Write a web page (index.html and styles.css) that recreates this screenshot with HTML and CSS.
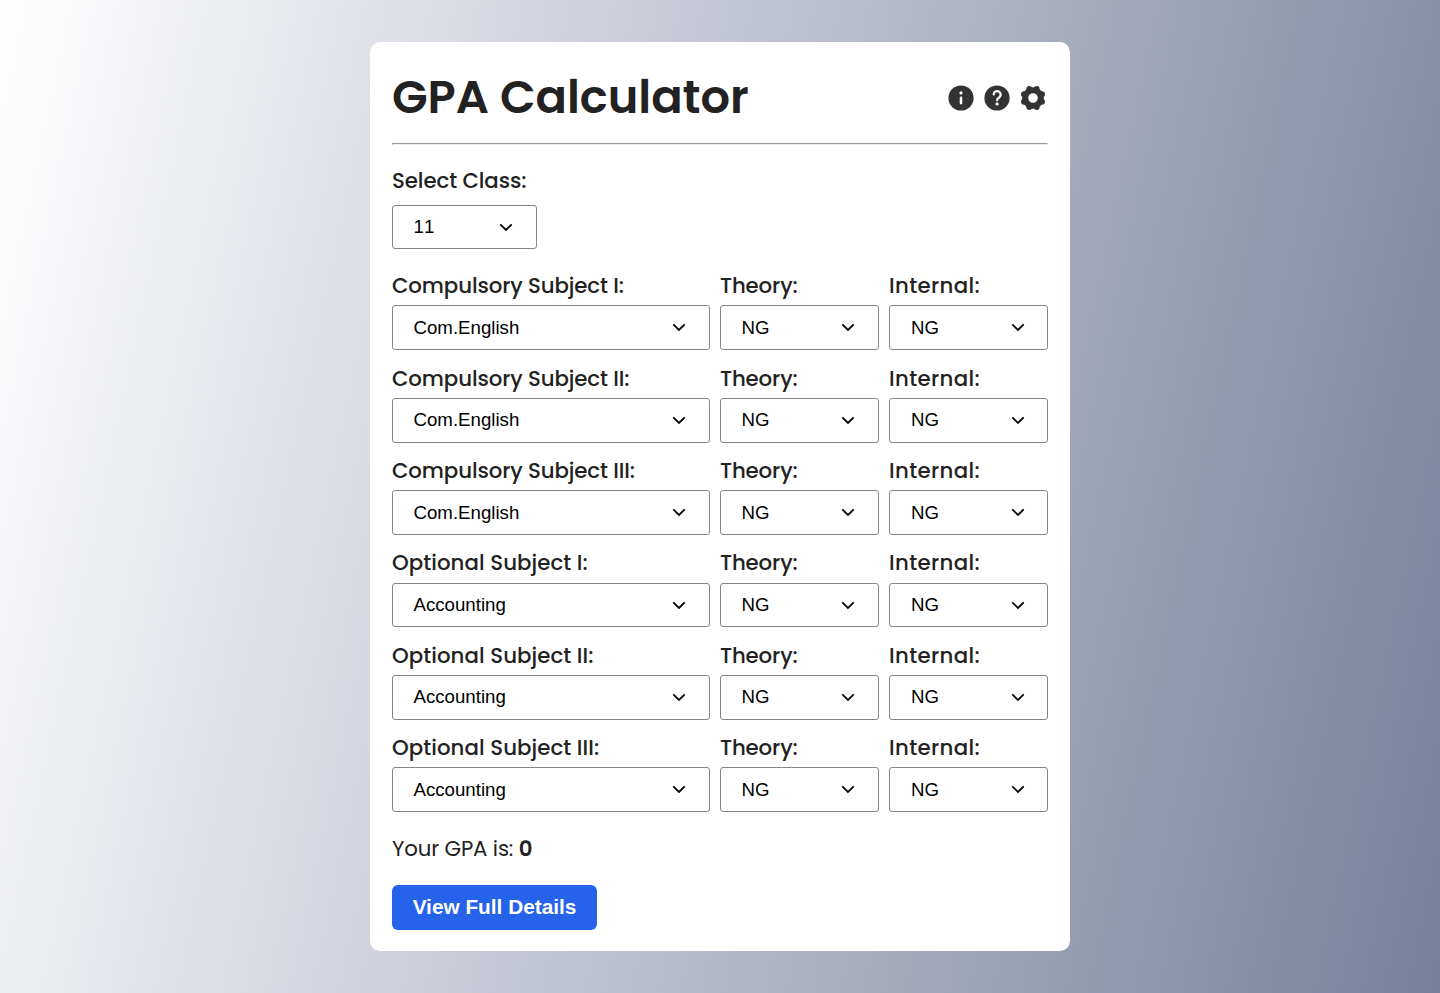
FILE: index.html
```html
<!DOCTYPE html>
<html lang="en">
<head>
<meta charset="utf-8">
<title>GPA Calculator</title>
<link rel="stylesheet" href="styles.css">
</head>
<body>
<main class="card">
  <header class="header">
    <h1 class="title">GPA Calculator</h1>
    <div class="icons">
      <svg class="icon" viewBox="0 0 26 26"><circle cx="13" cy="13" r="12.6" fill="#333"/><circle cx="13" cy="7.9" r="1.6" fill="#fff"/><path d="M13 12.800v5.300" stroke="#fff" stroke-width="2.6" stroke-linecap="round"/></svg>
      <svg class="icon" viewBox="0 0 26 26"><circle cx="13" cy="13" r="12.6" fill="#333"/><path d="M9.700 9.400a3.500 3.500 0 1 1 5.800 2.800c-1.500 1.200-2.400 1.600-2.400 3" fill="none" stroke="#fff" stroke-width="2.3" stroke-linecap="round"/><circle cx="13.100" cy="18.900" r="1.6" fill="#fff"/></svg>
      <svg class="icon" viewBox="0 0 26 26"><circle cx="13" cy="13" r="7.800" fill="none" stroke="#333" stroke-width="6"/><g fill="#333"><circle cx="16.750" cy="3.950" r="2.900"/><circle cx="22.050" cy="9.250" r="2.900"/><circle cx="22.050" cy="16.750" r="2.900"/><circle cx="16.750" cy="22.050" r="2.900"/><circle cx="9.250" cy="22.050" r="2.900"/><circle cx="3.950" cy="16.750" r="2.900"/><circle cx="3.950" cy="9.250" r="2.900"/><circle cx="9.250" cy="3.950" r="2.900"/></g></svg>
    </div>
  </header>
  <hr class="rule">
  <section class="class-field">
    <div class="label l-class">Select Class:</div>
    <div class="select select-class">11<svg class="chevron" viewBox="0 0 14 9"><path d="M1.300 1.300L7 7l5.700-5.700"/></svg></div>
  </section>
  <section class="subjects" id="subjects"></section>
  <p class="result">Your GPA is: <b class="gpa">0</b></p>
  <button class="button">View Full Details</button>
</main>
<script src="script.js"></script>
</body>
</html>
```
FILE: styles.css
```css
* { box-sizing: border-box; }
body {
  margin: 0;
  height: 993px;
  display: flex;
  align-items: center;
  justify-content: center;
  font-family: Poppins, Inter, sans-serif;
  color: #222;
  background: linear-gradient(102deg, #fff, #777f9b);
}
.card {
  width: 700px;
  height: 909px;
  padding: 20px 22px 21px;
  border-radius: 10px;
  background: #fff;
}
.header { display: flex; align-items: center; justify-content: space-between; height: 72px; }
.title { margin: 0; padding-bottom: 2px; font-size: 46.4px; font-weight: 600; line-height: 70px; letter-spacing: -0.04px; }
.icons { display: flex; gap: 10px; padding-right: 2px; }
.icon { width: 26px; height: 26px; display: block; }
.rule { margin: 9px 0 0; }
.label { font-size: 21.3px; font-weight: 500; line-height: 32px; height: 32px; white-space: nowrap; }
.l-class { letter-spacing: -0.08px; }
.l-compulsory { letter-spacing: -0.11px; }
.l-optional { letter-spacing: 0.06px; }
.l-theory { letter-spacing: -0.12px; }
.l-internal { letter-spacing: 0.36px; }
.class-field { margin-top: 20px; }
.select {
  display: flex;
  align-items: center;
  justify-content: space-between;
  height: 44.8px;
  padding: 0.3px 23.5px 0 20.5px;
  border: 1px solid #85858a;
  border-radius: 3px;
  color: #000;
  font: 18.67px "Liberation Sans", sans-serif;
}
.l-internal + .select { padding-right: 22.5px; padding-left: 21px; }
.select-class { width: 145px; height: 44px; margin-top: 8px; padding-top: 0; font-kerning: none; }
.chevron { width: 14px; height: 9px; fill: none; stroke: #000; stroke-width: 1.8; }
.subjects { margin-top: 21.2px; display: grid; gap: 12.6px; }
.row { display: grid; grid-template-columns: 318px 159px 159px; column-gap: 10px; }
.row .label { height: 35.2px; }
.row + .row { margin-top: -0.2px; }
.result { margin: 20.8px 0 0; font-size: 21.3px; line-height: 32px; letter-spacing: -0.16px; }
.gpa { font-weight: 600; }
.button {
  display: block;
  width: 205px;
  height: 45px;
  margin-top: 20px;
  padding: 0;
  border: 0;
  border-radius: 6px;
  background: #2563eb;
  color: #fff;
  font: bold 20.8px "Liberation Sans", sans-serif;
}
```
FILE: script.js
```js
const chevron = '<svg class="chevron" viewBox="0 0 14 9"><path d="M1.300 1.300L7 7l5.700-5.700"/></svg>';
const rows = [
  ["Compulsory Subject I:", "Com.English", "l-compulsory"],
  ["Compulsory Subject II:", "Com.English", "l-compulsory"],
  ["Compulsory Subject III:", "Com.English", "l-compulsory"],
  ["Optional Subject I:", "Accounting", "l-optional"],
  ["Optional Subject II:", "Accounting", "l-optional"],
  ["Optional Subject III:", "Accounting", "l-optional"]
];
const field = (label, value, cls) =>
  `<div><div class="label ${cls}">${label}</div><div class="select">${value}${chevron}</div></div>`;
document.getElementById("subjects").innerHTML = rows.map(([label, value, cls]) =>
  `<div class="row">${field(label, value, cls)}${field("Theory:", "NG", "l-theory")}${field("Internal:", "NG", "l-internal")}</div>`
).join("");
```
